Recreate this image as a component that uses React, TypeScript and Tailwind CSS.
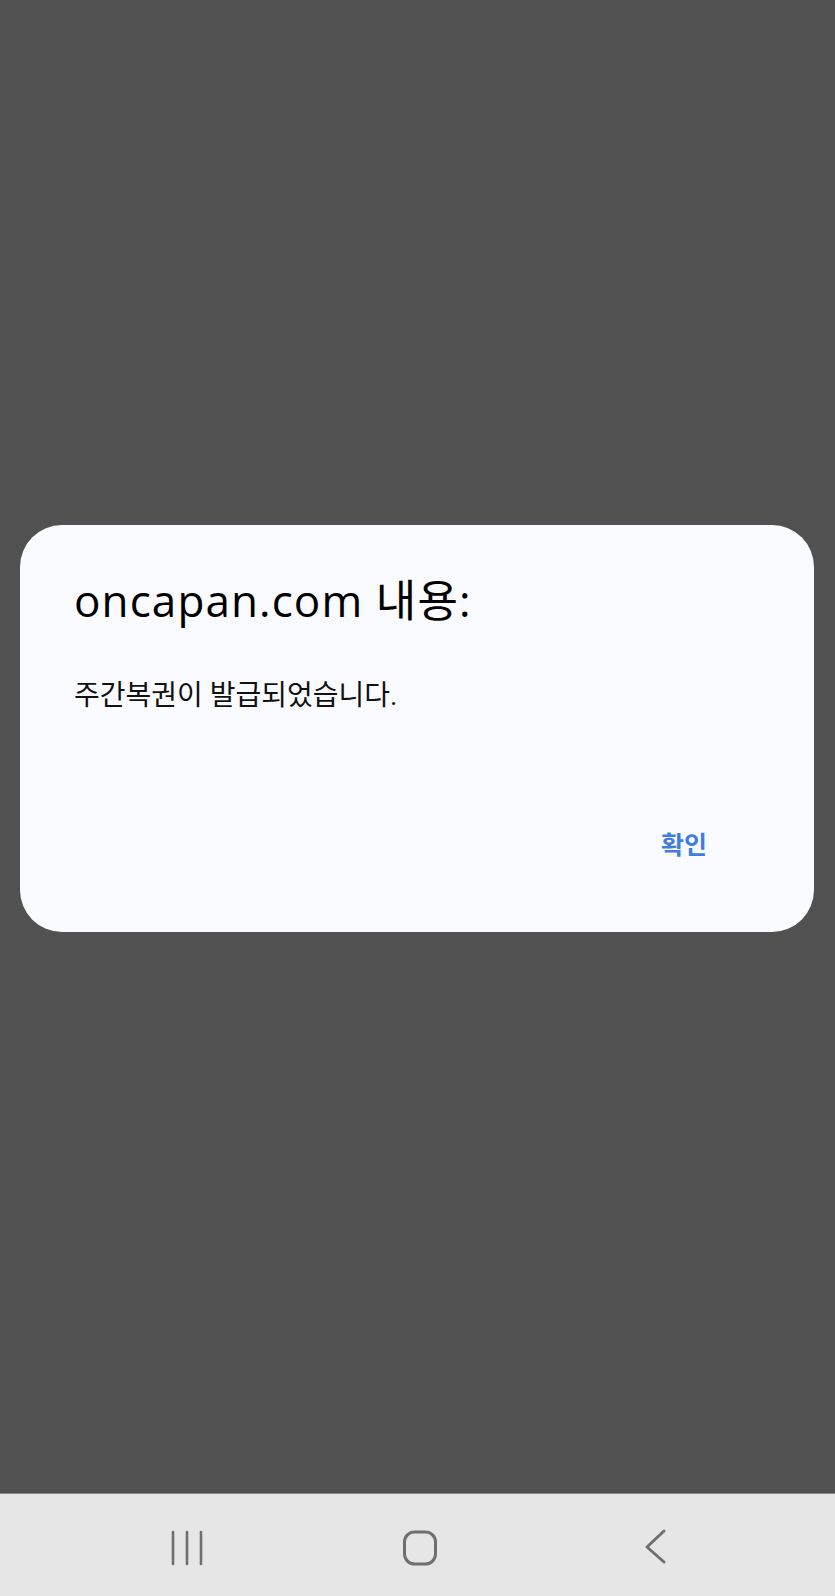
import React from "react";

const font = { fontFamily: '"Roboto", "Noto Sans CJK KR", sans-serif' };
const titleFont = { fontFamily: '"Open Sans", "Noto Sans CJK KR", sans-serif' };

function NavBar() {
  return (
    <div className="h-[103px] bg-[#e6e6e6] border-t border-[#8a8a8a] flex items-center">
      <div className="relative w-full h-full">
        {/* recents */}
        <svg className="absolute left-[170px] top-[36px]" width="34" height="36" viewBox="0 0 34 36">
          <g stroke="#6f6f6f" strokeWidth="2.6" strokeLinecap="round">
            <line x1="3" y1="2" x2="3" y2="34" />
            <line x1="17" y1="2" x2="17" y2="34" />
            <line x1="31" y1="2" x2="31" y2="34" />
          </g>
        </svg>
        {/* home */}
        <svg className="absolute left-[401px] top-[35px]" width="38" height="38" viewBox="0 0 38 38">
          <rect x="3.5" y="3" width="31" height="32" rx="10" fill="none" stroke="#6f6f6f" strokeWidth="3" />
        </svg>
        {/* back */}
        <svg className="absolute left-[642px] top-[34px]" width="28" height="38" viewBox="0 0 28 38">
          <polyline points="22,3 5,19 22,34" fill="none" stroke="#6f6f6f" strokeWidth="3" strokeLinecap="round" strokeLinejoin="round" />
        </svg>
      </div>
    </div>
  );
}

export default function App() {
  return (
    <div className="w-[835px] h-[1596px] bg-[#515151] flex flex-col" style={font}>
      <div className="flex-1 pt-[525px] px-[20px]">
        <div className="w-[794px] h-[407px] bg-[#fafbfe] rounded-[42px] flex flex-col pl-[54px] pr-[107px]">
          <h1 className="mt-[51px] text-[44px] leading-[48px] text-black tracking-[1.1px]" style={titleFont}>
            oncapan.com 내용:
          </h1>
          <p className="mt-[55px] text-[28px] leading-[34px] text-[#111]">
            주간복권이 발급되었습니다.
          </p>
          <div className="mt-auto mb-[70px] flex justify-end">
            <button className="text-[25px] leading-[32px] font-semibold text-[#3f7de0]">
              확인
            </button>
          </div>
        </div>
      </div>
      <NavBar />
    </div>
  );
}
